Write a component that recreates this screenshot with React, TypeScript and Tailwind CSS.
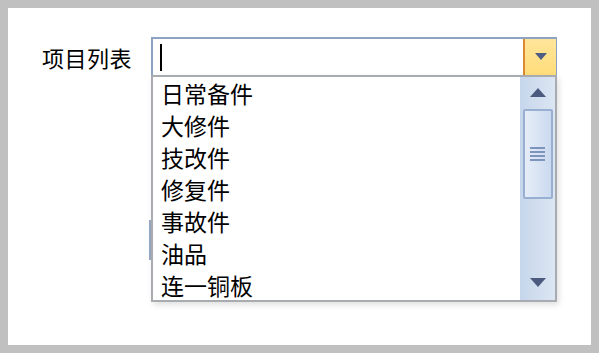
import { FC } from 'react';

const items = ['日常备件', '大修件', '技改件', '修复件', '事故件', '油品', '连一铜板'];

const font = { fontFamily: '"Noto Sans CJK SC", "Noto Sans", sans-serif' };

const App: FC = () => {
  return (
    <div className="w-[599px] h-[353px] bg-[#c0c0c0] pt-[8px] pl-[8px] pr-[8px] pb-[8px]" style={font}>
      <div className="relative w-full h-full bg-white">
        <div className="flex items-center pt-[29px] pl-[34px]">
          <span className="text-[22px] leading-none text-black w-[109px] tracking-[0.5px]">项目列表</span>
          <div className="flex w-[406px] h-[39px] border-t-2 border-l-2 border-r border-[#8ea3c2] border-b border-b-[#a9a9a9]">
            <div className="flex-1 flex items-center pl-[7px]">
              <div className="w-[2px] h-[27px] bg-black" />
            </div>
            <div className="w-[33px] h-full bg-gradient-to-b from-[#ffe59a] to-[#ffdd7a] border-l-2 border-l-[#d98a32] flex items-center justify-center">
              <svg width="12" height="8" viewBox="0 0 12 8">
                <path d="M0 0h12L6 7z" fill="#4f5d84" />
              </svg>
            </div>
          </div>
        </div>

        {/* control hidden behind the popup */}
        <div className="absolute left-[141px] top-[212px] w-[2px] h-[40px] bg-[#98a9c6]" />

        <div className="absolute left-[143px] top-[67px] w-[406px] h-[227px] bg-white border-2 border-[#a8abb0] flex shadow-[2px_3px_6px_rgba(0,0,0,0.12)]">
          <ul className="flex-1 pl-[8px]">
            {items.map((item) => (
              <li key={item} className="h-[32px] flex items-center text-[23px] leading-none text-black">
                {item}
              </li>
            ))}
          </ul>
          <div className="w-[35px] h-full bg-gradient-to-r from-[#c6d6eb] to-[#dce6f3] flex flex-col items-center">
            <div className="h-[32px] flex items-center justify-center">
              <svg width="16" height="10" viewBox="0 0 16 10">
                <path d="M8 0L16 9H0z" fill="#4c5a80" />
              </svg>
            </div>
            <div className="w-[30px] h-[90px] border-2 border-[#98afd2] rounded-[2px] bg-gradient-to-r from-[#e6edf8] to-[#cbdaef] flex items-center justify-center">
              <div className="flex flex-col gap-[2px]">
                <div className="w-[15px] h-[2px] bg-[#7d94bd]" />
                <div className="w-[15px] h-[2px] bg-[#7d94bd]" />
                <div className="w-[15px] h-[2px] bg-[#7d94bd]" />
                <div className="w-[15px] h-[2px] bg-[#7d94bd]" />
              </div>
            </div>
            <div className="flex-1" />
            <div className="h-[30px] flex items-start justify-center pt-[8px]">
              <svg width="16" height="10" viewBox="0 0 16 10">
                <path d="M0 0h16L8 9z" fill="#4c5a80" />
              </svg>
            </div>
          </div>
        </div>
      </div>
    </div>
  );
};

export default App;
